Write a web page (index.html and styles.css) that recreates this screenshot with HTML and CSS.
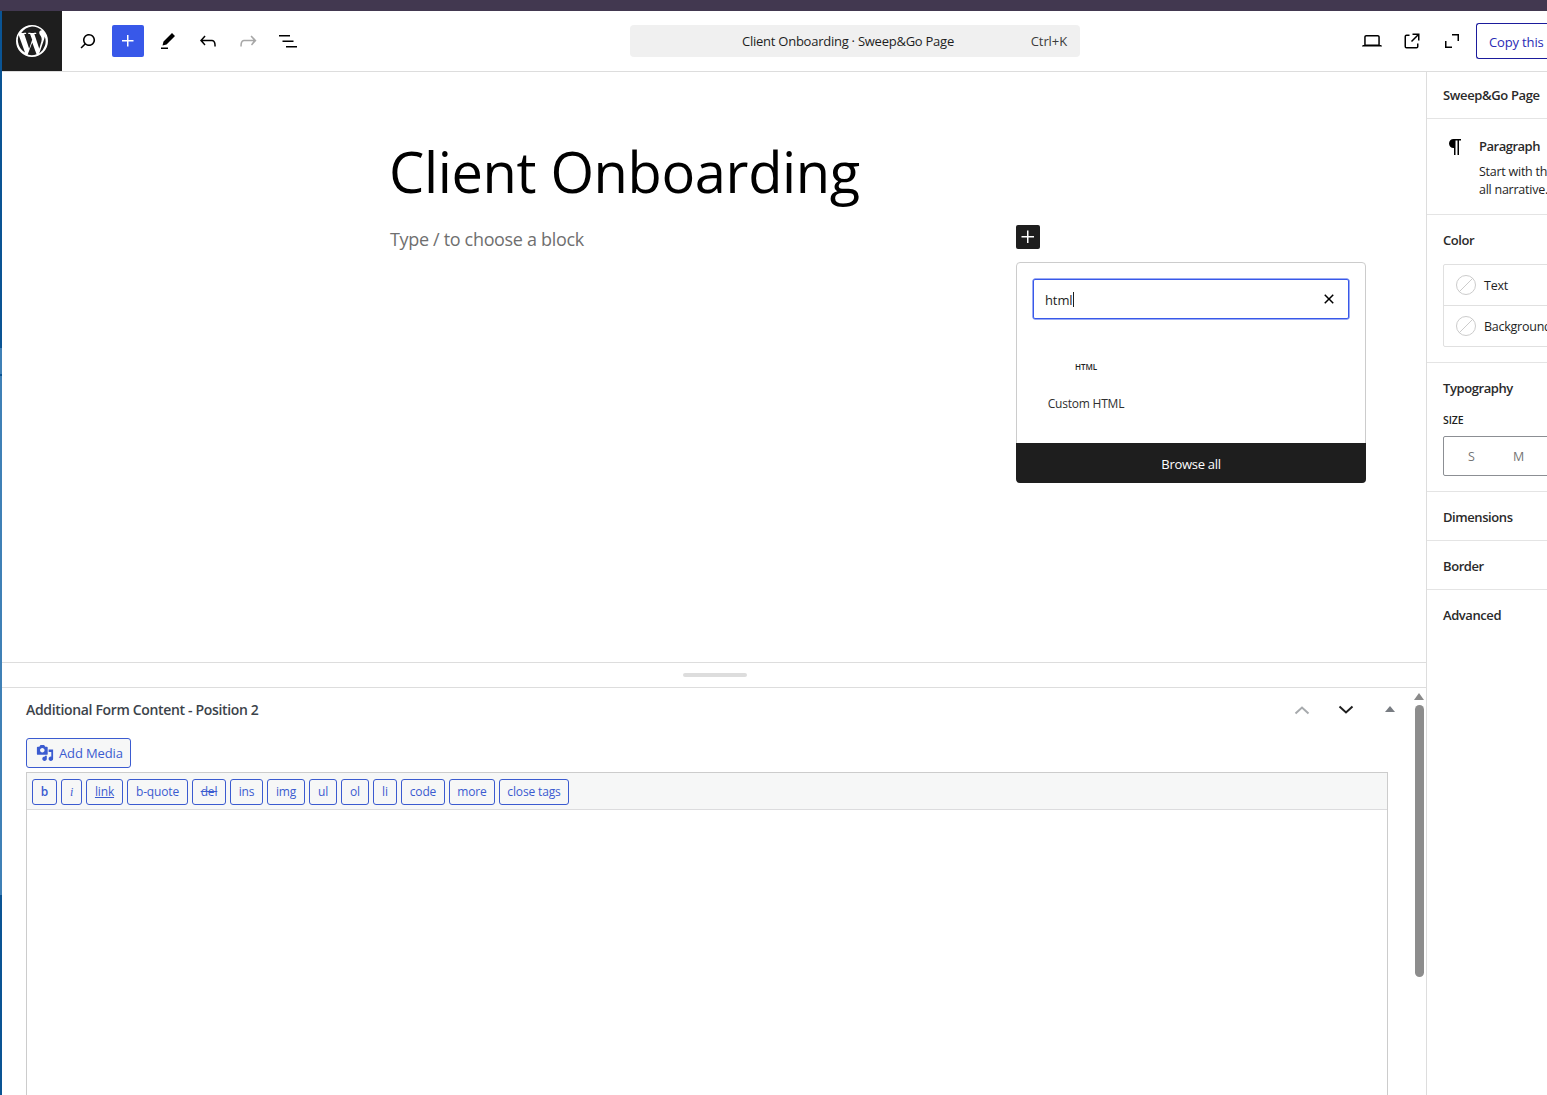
FILE: index.html
```html
<!DOCTYPE html>
<html lang="en">
<head>
<meta charset="utf-8">
<title>Client Onboarding</title>
<link rel="stylesheet" href="styles.css">
</head>
<body>
<div class="os-strip"></div>
<div class="shell">
  <div class="edge"></div>
  <div class="app">
    <header class="topbar">
      <a class="wp-logo">
        <svg viewBox="0 0 80 80" width="32" height="32"><path fill="#fff" d="M40 0a40 40 0 1 0 0 80 40 40 0 0 0 0-80zm0 3.600a36.400 36.400 0 0 1 24.700 9.600h-1c-3.300 0-5.600 2.900-5.600 6 0 2.800 1.600 5.100 3.300 7.900 1.300 2.300 2.800 5.200 2.800 9.400 0 2.900-.9 6.600-2.600 11.200l-3.400 11.400-12.300-36.600c2-.1 3.900-.3 3.900-.3 1.800-.2 1.600-2.900-.2-2.800 0 0-5.500.4-9 .4-3.300 0-8.900-.4-8.900-.4-1.800-.1-2 2.700-.2 2.800 0 0 1.700.2 3.600.3l5.300 14.500-7.400 22.300-12.400-36.800c2.100-.1 3.900-.3 3.900-.3 1.800-.2 1.600-2.900-.2-2.800 0 0-5.500.4-9 .4h-2.200A36.400 36.400 0 0 1 40 3.600zM6.700 25.200l15.800 43.400A36.400 36.400 0 0 1 6.700 25.200zm33.900 18.500l10.700 29.200.2.500a36.500 36.500 0 0 1-22.300.6zm31-15.500A36.400 36.400 0 0 1 58 71.300l11.100-32.100c2.100-5.200 2.800-9.300 2.800-13 0-1.300-.1-2.600-.3-3.800z"/></svg>
      </a>
      <div class="tools">
        <button class="tool"><svg viewBox="0 0 24 24" width="24" height="24"><path d="M13 5c-3.300 0-6 2.700-6 6 0 1.400.5 2.700 1.300 3.700l-3.800 3.800 1.100 1.100 3.800-3.800c1 .8 2.300 1.300 3.700 1.300 3.300 0 6-2.700 6-6S16.300 5 13 5zm0 10.500c-2.500 0-4.500-2-4.500-4.500s2-4.500 4.500-4.500 4.500 2 4.500 4.500-2 4.500-4.500 4.500z"/></svg></button>
        <button class="tool tool-primary"><svg viewBox="0 0 24 24" width="24" height="24"><path fill="#fff" d="M11 12.500V17.500H12.500V12.500H17.500V11H12.500V6H11V11H6V12.500H11Z"/></svg></button>
        <button class="tool"><svg viewBox="0 0 24 24" width="24" height="24"><path d="m19 7-3-3-8.500 8.500-1 4 4-1L19 7zm-7 11.500H5V20h7v-1.500z"/></svg></button>
        <button class="tool"><svg viewBox="0 0 24 24" width="24" height="24"><path d="M18.300 11.700c-.6-.6-1.400-.9-2.300-.9H6.700l2.900-3.300-1.100-1-4.500 5L8.500 16.500l1-1-2.700-3.200H16c.5 0 .9.200 1.300.5 1 1 1 3.400 1 4.500v.3h1.500v-.2c0-1.500 0-4.300-1.500-5.700z"/></svg></button>
        <button class="tool tool-off"><svg viewBox="0 0 24 24" width="24" height="24"><path d="M15.600 6.500l-1.100 1 2.900 3.300H8c-.9 0-1.700.3-2.300.9-1.400 1.500-1.400 4.200-1.400 5.700v.2h1.500v-.3c0-1.100 0-3.500 1-4.500.3-.3.700-.5 1.300-.5h9.200L15 15.500l1 1 4.500-5-4.900-5z"/></svg></button>
        <button class="tool"><svg viewBox="0 0 24 24" width="24" height="24"><path d="M3 6h11v1.500H3V6zm3.500 5.500h11V13h-11v-1.500zM21 17H10v1.500h11V17z"/></svg></button>
      </div>
      <div class="center">
        <div class="doc-bar">
          <span class="doc-title">Client Onboarding · Sweep&amp;Go Page</span>
          <span class="doc-key">Ctrl+K</span>
        </div>
      </div>
      <div class="settings">
        <button class="tool"><svg viewBox="0 0 24 24" width="24" height="24"><path d="M20.500 16h-.7V8c0-1.100-.9-2-2-2H6.200c-1.100 0-2 .9-2 2v8h-.7c-.8 0-1.500.7-1.500 1.500h20c0-.8-.7-1.500-1.500-1.500zM5.700 8c0-.3.200-.5.500-.5h11.600c.3 0 .5.200.5.500v7.600H5.700V8z"/></svg></button>
        <button class="tool"><svg viewBox="0 0 24 24" width="24" height="24"><path d="M19.500 4.500h-7V6h4.440l-5.970 6.030 1.060 1.060L18 7.060v4.440h1.500v-7Zm-13 1a2 2 0 0 0-2 2v10a2 2 0 0 0 2 2h10a2 2 0 0 0 2-2v-3H17v3a.5.500 0 0 1-.5.500h-10a.5.500 0 0 1-.5-.5v-10a.5.500 0 0 1 .5-.5h3V5.500h-3Z"/></svg></button>
        <button class="tool"><svg viewBox="0 0 24 24" width="24" height="24"><path d="M5 12h1.500v5.500H12V19H5V12zM19 12h-1.500V6.500H12V5h7V12z"/></svg></button>
        <button class="copy">Copy this</button>
      </div>
    </header>
    <div class="workspace">
      <main class="editor">
        <section class="canvas">
          <div class="doc">
            <h1 class="title">Client Onboarding</h1>
            <p class="placeholder">Type / to choose a block</p>
          </div>
          <div class="inserter">
            <button class="ins-toggle"><svg viewBox="0 0 24 24" width="24" height="24"><path fill="#fff" d="M11 12.500V18H12.500V12.500H18V11H12.500V5.500H11V11H5.500V12.500H11Z"/></svg></button>
            <div class="popover">
              <div class="search">
                <span class="search-text">html</span><span class="caret"></span>
                <svg class="search-x" viewBox="0 0 24 24" width="24" height="24"><path d="M12 13.060l3.712 3.713 1.061-1.060L13.060 12l3.713-3.712-1.060-1.060L12 10.938 8.288 7.227l-1.061 1.060L10.939 12l-3.712 3.712 1.060 1.061L12 13.061z"/></svg>
              </div>
              <div class="result">
                <span class="html-ico">HTML</span>
                <span class="result-name">Custom HTML</span>
              </div>
              <div class="browse">Browse all</div>
            </div>
          </div>
        </section>
        <div class="resize"><span class="handle"></span></div>
        <section class="metabox">
          <div class="meta-scroll">
            <div class="meta-head">
              <h2 class="meta-title">Additional Form Content - Position 2</h2>
              <div class="meta-ctrls">
                <svg class="ctrl ctrl-off" viewBox="0 0 16 10" width="16" height="10"><path d="M1.500 8.500 8 2.500l6.500 6" fill="none" stroke="currentColor" stroke-width="2"/></svg>
                <svg class="ctrl" viewBox="0 0 16 10" width="16" height="10"><path d="M1.500 1.500 8 7.500l6.500-6" fill="none" stroke="currentColor" stroke-width="2"/></svg>
                <span class="tri"></span>
              </div>
            </div>
            <button class="media">
              <svg viewBox="0 0 20 20" width="18" height="18"><path fill="currentColor" d="M13 11V4c0-.55-.45-1-1-1h-1.670L9 1H5L3.670 3H2c-.55 0-1 .45-1 1v7c0 .55.45 1 1 1h10c.55 0 1-.45 1-1zM7 4.500c1.380 0 2.500 1.120 2.500 2.500S8.380 9.500 7 9.500 4.500 8.380 4.500 7 5.620 4.500 7 4.500zM14 6h5v10.500c0 1.380-1.120 2.500-2.500 2.500S14 17.880 14 16.500s1.120-2.500 2.500-2.500c.17 0 .34.020.5.050V9h-3V6zm-4 8.050V13h2v3.500c0 1.380-1.120 2.500-2.500 2.500S7 17.880 7 16.500 8.120 14 9.500 14c.17 0 .34.020.5.050z"/></svg>
              <span>Add Media</span>
            </button>
            <div class="text-editor">
              <div class="qt">
                <button class="qt-b qt-bold">b</button>
                <button class="qt-b qt-it">i</button>
                <button class="qt-b qt-link">link</button>
                <button class="qt-b qt-quote">b-quote</button>
                <button class="qt-b qt-del">del</button>
                <button class="qt-b qt-ins">ins</button>
                <button class="qt-b qt-img">img</button>
                <button class="qt-b qt-ul">ul</button>
                <button class="qt-b qt-ul">ol</button>
                <button class="qt-b qt-li">li</button>
                <button class="qt-b qt-code">code</button>
                <button class="qt-b qt-more">more</button>
                <button class="qt-b qt-close">close tags</button>
              </div>
              <div class="area"></div>
            </div>
          </div>
          <div class="scrollbar">
            <span class="sb-up"></span>
            <span class="sb-thumb"></span>
          </div>
        </section>
      </main>
      <aside class="sidebar">
        <div class="side-head">Sweep&amp;Go Page</div>
        <div class="panel block-card">
          <span class="pilcrow"><svg viewBox="0 0 24 24" width="24" height="24"><path d="M18 4H10.500C8 4 6 6 6 8.500S8 13 10.500 13H11v7h1.500V5.500h2V20H16V5.500h2V4z"/></svg></span>
          <div class="card-body">
            <div class="card-title">Paragraph</div>
            <div class="card-desc">Start with the basic building block of<br>all narrative.</div>
          </div>
        </div>
        <div class="panel color-panel">
          <h3 class="panel-title">Color</h3>
          <div class="color-list">
            <div class="color-row"><span class="swatch"></span><span>Text</span></div>
            <div class="color-row"><span class="swatch"></span><span>Background</span></div>
          </div>
        </div>
        <div class="panel type-panel">
          <h3 class="panel-title">Typography</h3>
          <div class="size-label">SIZE</div>
          <div class="size-group"><span class="size-s">S</span><span class="size-m">M</span><span class="size-m">L</span></div>
        </div>
        <div class="panel collapsed"><h3 class="panel-title">Dimensions</h3></div>
        <div class="panel collapsed"><h3 class="panel-title">Border</h3></div>
        <div class="panel collapsed last"><h3 class="panel-title">Advanced</h3></div>
      </aside>
    </div>
  </div>
</div>
</body>
</html>
```
FILE: styles.css
```css
* { box-sizing: border-box; }
html, body { height: 100%; margin: 0; overflow: hidden; }
body {
  display: flex;
  flex-direction: column;
  background: #fff;
  color: #1e1e1e;
  font-family: "Open Sans", "Noto Sans", sans-serif;
  font-size: 13px;
}
button { font: inherit; background: none; border: 0; padding: 0; margin: 0; }
h1, h2, h3, p { margin: 0; font-weight: 400; }
svg { display: block; }

.os-strip { height: 11px; flex: none; background: #423850; }
.shell { flex: 1; min-height: 0; display: flex; }
.edge {
  width: 2px; flex: none;
  background: linear-gradient(#0a5494 0 337px, #3f80b6 337px 363px, #0a5494 363px 365px, #3f80b6 365px 884px, #0a5494 884px);
}
.app { flex: 1; min-width: 0; display: flex; flex-direction: column; }

.topbar {
  height: 61px; flex: none;
  display: flex; align-items: center;
  border-bottom: 1px solid #ddd;
  background: #fff;
  overflow: hidden;
  position: relative;
}
.wp-logo { width: 60px; height: 60px; flex: none; background: #1e1e1e; display: flex; align-items: center; justify-content: center; }
.tools { display: flex; gap: 8px; padding-left: 10px; align-items: center; }
.tool { width: 32px; height: 32px; display: flex; align-items: center; justify-content: center; border-radius: 2px; flex: none; }
.tool-primary { background: #3858e9; }
.tool-off svg { fill: #a7a7a7; }
.center { position: absolute; left: 628px; top: 14px; }
.doc-bar {
  width: 450px; height: 32px; border-radius: 4px;
  background: #f0f0f0;
  display: flex; align-items: center;
  font-size: 13px; color: #1e1e1e;
  position: relative;
}
.doc-title { position: absolute; left: 0; right: 0; text-align: center; padding-right: 14px; letter-spacing: -.25px; }
.doc-key { position: absolute; right: 13px; color: #3c3c3c; letter-spacing: -.1px; }
.settings { margin-left: auto; display: flex; align-items: center; gap: 8px; }
.copy {
  width: 80px; height: 36px; margin-right: -9px; padding-top: 1px;
  border: 1px solid #1b1b9c; border-radius: 3px 0 0 3px;
  border-right: 0;
  color: #2a2ab5; text-align: left; padding-left: 12px;
  font-size: 13px; white-space: nowrap; letter-spacing: -.15px;
}

.workspace { flex: 1; min-height: 0; display: flex; }
.editor { flex: 1; min-width: 0; display: flex; flex-direction: column; }

.canvas { height: 591px; flex: none; position: relative; border-bottom: 1px solid #ddd; }
.doc { padding: 60px 0 0 387px; }
.title { font-size: 56px; line-height: 80px; color: #000; letter-spacing: -.35px; margin-top: -1px; }
.placeholder { font-size: 18px; line-height: 28px; color: #6f6f6f; margin-top: 14px; padding-left: 1px; letter-spacing: -.33px; }

.inserter { position: absolute; left: 1014px; top: 153px; width: 350px; }
.ins-toggle { width: 24px; height: 24px; background: #1e1e1e; border-radius: 2px; display: block; }
.popover {
  margin-top: 13px; width: 350px; height: 221px;
  background: #fff; border: 1px solid #ccc; border-radius: 4px;
  display: flex; flex-direction: column;
}
.search {
  margin: 16px 16px 0; height: 40px; flex: none;
  border: 1px solid #3858e9; border-radius: 2px;
  box-shadow: 0 0 0 .5px #3858e9;
  display: flex; align-items: center; padding: 1px 0 0 11px;
  position: relative; font-size: 13px;
  letter-spacing: -.1px;
}
.caret { width: 1px; height: 15px; background: #1e1e1e; margin-left: 0; }
.search-x { position: absolute; right: 7px; top: 7px; }
.result { flex: 1; display: flex; flex-direction: column; align-items: center; width: 138px; padding-top: 42px; }
.html-ico { font-size: 8px; font-weight: 600; line-height: 12px; }
.result-name { font-size: 12px; line-height: 18px; margin-top: 22px; color: #2f2f2f; letter-spacing: -.22px; }
.browse { height: 40px; flex: none; background: #1e1e1e; color: #fff; text-align: center; line-height: 42px; font-size: 13px; letter-spacing: -.3px; margin: 0 -1px -1px; border-radius: 0 0 4px 4px; }

.resize { height: 25px; flex: none; display: flex; justify-content: center; padding-top: 10px; border-bottom: 1px solid #ddd; }
.handle { width: 64px; height: 4px; border-radius: 2px; background: #ddd; margin-left: 1px; }

.metabox { flex: 1; min-height: 0; display: flex; overflow: hidden; }
.meta-scroll { flex: 1; min-width: 0; padding-left: 24px; }
.meta-head { height: 42px; display: flex; align-items: center; }
.meta-title { font-size: 14px; font-weight: 600; color: #3c434a; letter-spacing: -.34px; }
.meta-ctrls { margin-left: auto; display: flex; align-items: center; gap: 28px; padding-right: 17px; margin-top: 1px; }
.ctrl { color: #1e1e1e; }
.ctrl-off { color: #a7aaad; }
.tri { width: 0; height: 0; border: 5px solid transparent; border-top: 0; border-bottom: 6px solid #787c82; margin: 0 0 2px 3px; }

.media {
  height: 30px; width: 105px; margin-top: 8px;
  display: flex; align-items: center; gap: 5px; padding-left: 9px;
  background: #f6f7f7; border: 1px solid #3b5bd0; border-radius: 3px;
  color: #3b5bd0; font-size: 13px; letter-spacing: -.12px;
}
.text-editor { margin-top: 4px; width: 1362px; border: 1px solid #ccc; border-bottom: 0; }
.qt { height: 37px; background: #f6f7f7; border-bottom: 1px solid #dcdcde; display: flex; gap: 4px; padding: 6px 5px 0; }
.qt-b {
  height: 26px; flex: none; text-align: center;
  background: #f6f7f7; border: 1px solid #3b5bd0; border-radius: 3px;
  color: #3b5bd0; font-size: 12px; letter-spacing: -.15px; line-height: 24px;
}
.qt-bold { font-weight: 600; width: 25px; }
.qt-it { font-style: italic; width: 21px; font-family: "Liberation Serif", serif; }
.qt-link { text-decoration: underline; width: 37px; }
.qt-quote { width: 61px; }
.qt-del { text-decoration: line-through; width: 34px; }
.qt-ins { width: 33px; }
.qt-img { width: 38px; }
.qt-ul { width: 28px; }
.qt-li { width: 24px; }
.qt-code { width: 44px; }
.qt-more { width: 46px; }
.qt-close { width: 70px; }
.area { height: 300px; background: #fff; }

.scrollbar { width: 14px; flex: none; display: flex; flex-direction: column; align-items: center; padding-top: 5px; }
.sb-up { width: 0; height: 0; border: 5px solid transparent; border-top: 0; border-bottom: 7px solid #8a8a8a; }
.sb-thumb { width: 9px; height: 272px; background: #8d8d8d; border-radius: 5px; margin-top: 5px; }

.sidebar { width: 121px; flex: none; border-left: 1px solid #ddd; overflow: hidden; }
.side-head { height: 47px; padding-left: 16px; display: flex; align-items: center; font-weight: 600; font-size: 13px; color: #2a2a2a; border-bottom: 1px solid #e4e4e4; white-space: nowrap; letter-spacing: -.36px; }
.panel { border-bottom: 1px solid #e4e4e4; width: 280px; padding-left: 16px; }
.panel-title { font-size: 13px; font-weight: 600; color: #2a2a2a; letter-spacing: -.42px; line-height: 18px; }
.block-card { height: 96px; display: flex; gap: 12px; padding-top: 16px; }
.pilcrow { flex: none; }
.card-body { padding-top: 3px; }
.card-title { font-weight: 600; color: #2a2a2a; letter-spacing: -.5px; line-height: 16px; }
.card-desc { font-size: 12.5px; line-height: 18px; margin-top: 9px; letter-spacing: -.25px; white-space: nowrap; }
.color-panel { height: 148px; padding-top: 16px; }
.color-list { margin-top: 15px; border: 1px solid #e0e0e0; border-radius: 2px; }
.color-row { height: 40px; display: flex; align-items: center; gap: 8px; padding-left: 12px; font-size: 12.5px; letter-spacing: -.25px; }
.color-row + .color-row { height: 41px; border-top: 1px solid #e0e0e0; }
.swatch {
  width: 20px; height: 20px; border-radius: 50%; border: 1px solid #ccc; flex: none;
  background: linear-gradient(-45deg, transparent 48%, #ccc 48%, #ccc 52%, transparent 52%);
}
.type-panel { height: 129px; padding-top: 16px; }
.size-label { font-size: 10.5px; font-weight: 600; margin-top: 15px; line-height: 16px; letter-spacing: -.1px; }
.size-group { margin-top: 8px; width: 248px; height: 40px; border: 1px solid #8c8f94; border-radius: 2px; display: flex; align-items: center; padding-left: 24px; color: #757575; font-size: 12.5px; }
.size-s { width: 45px; }
.size-m { width: 49px; }
.collapsed { height: 49px; padding-top: 16px; }
.collapsed.last { border-bottom: 0; }
```
